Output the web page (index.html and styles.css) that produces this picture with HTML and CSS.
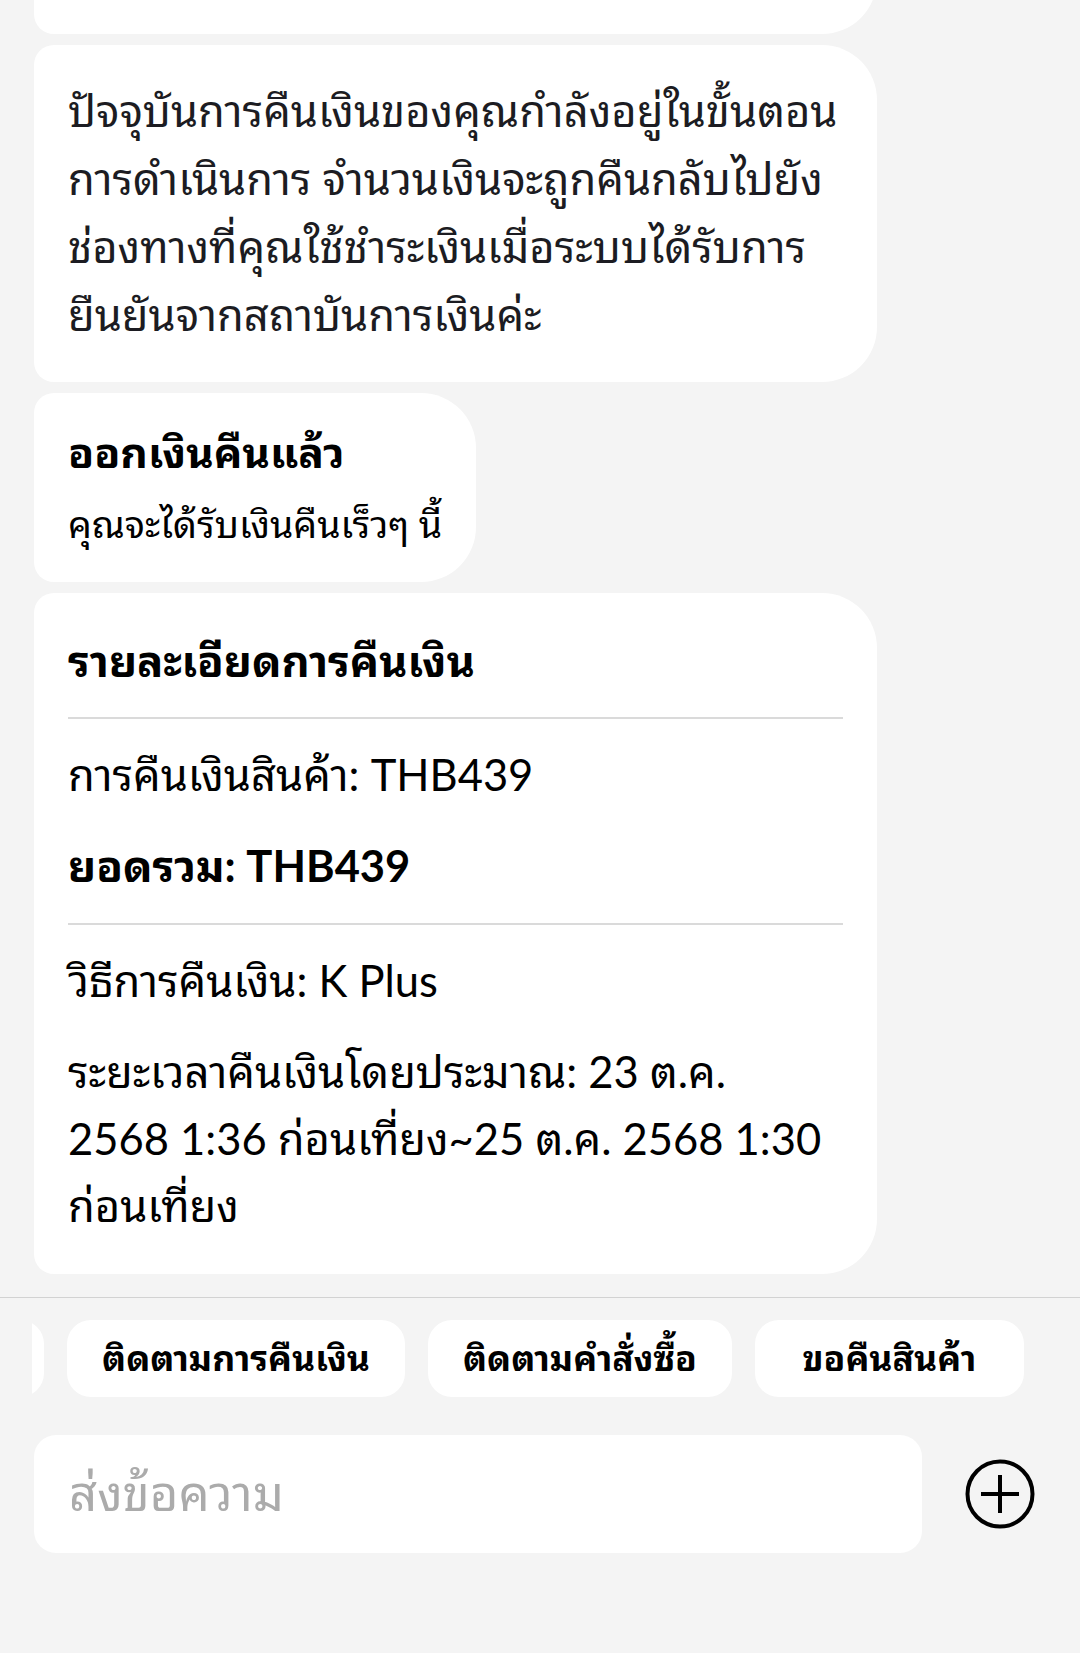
FILE: index.html
```html
<!DOCTYPE html>
<html lang="th">

<head>
    <meta charset="UTF-8">
    <meta name="viewport" content="width=device-width, initial-scale=1.0">
    <title>แชท</title>
    <link rel="stylesheet" href="styles.css">
</head>

<body>

    <div class="chat">
        <div class="messages">
            <div class="bubble">
                <p>เราได้รับคำขอคืนเงินของคุณแล้ว ระบบกำลังตรวจสอบข้อมูลคำสั่งซื้อของคุณ กรุณารอสักครู่ค่ะ</p>
            </div>

            <div class="bubble">
                <p>ปัจจุบันการคืนเงินของคุณกำลังอยู่ในขั้นตอนการดำเนินการ จำนวนเงินจะถูกคืนกลับไปยังช่องทางที่คุณใช้ชำระเงินเมื่อระบบได้รับการยืนยันจากสถาบันการเงินค่ะ</p>
            </div>

            <div class="bubble status">
                <p class="status-title">ออกเงินคืนแล้ว</p>
                <p class="status-text">คุณจะได้รับเงินคืนเร็วๆ นี้</p>
            </div>

            <div class="bubble detail">
                <h2>รายละเอียดการคืนเงิน</h2>
                <hr>
                <p>การคืนเงินสินค้า: THB439</p>
                <p class="total">ยอดรวม: THB439</p>
                <hr>
                <p>วิธีการคืนเงิน: K Plus</p>
                <p>ระยะเวลาคืนเงินโดยประมาณ: 23 ต.ค. 2568 1:36 ก่อนเที่ยง~25 ต.ค. 2568 1:30 ก่อนเที่ยง</p>
            </div>
        </div>

        <div class="quick-replies">
            <button class="chip">สถานะคำสั่งซื้อ</button>
            <button class="chip">ติดตามการคืนเงิน</button>
            <button class="chip">ติดตามคำสั่งซื้อ</button>
            <button class="chip">ขอคืนสินค้า</button>
        </div>

        <div class="composer">
            <div class="input">ส่งข้อความ</div>
            <button class="add-btn" aria-label="เพิ่ม">
                <svg width="70" height="70" viewBox="0 0 70 70">
                    <circle cx="35" cy="35" r="32.5" fill="none" stroke="#000" stroke-width="4"/>
                    <path d="M16 35 H54 M35 16 V54" stroke="#000" stroke-width="4"/>
                </svg>
            </button>
        </div>
    </div>

</body>

</html>
```

FILE: styles.css
```css
body {
    margin: 0;
    padding: 0;
    background-color: #f4f4f4;
    font-family: Lato, "Noto Sans Thai Looped", "Noto Sans Thai", "Noto Sans", sans-serif;
    color: #1c1c22;
}

p,
h2 {
    margin: 0;
}

.chat {
    width: 1080px;
    height: 1653px;
    overflow: hidden;
}

/* รายการข้อความ ชิดด้านล่างเหมือนแชทที่เลื่อนลงสุด */
.messages {
    height: 1298px;
    box-sizing: border-box;
    overflow: hidden;
    display: flex;
    flex-direction: column;
    justify-content: flex-end;
    align-items: flex-start;
    gap: 11px;
    padding: 0 0 23px 34px;
    border-bottom: 1px solid #d2d2d2;
}

.bubble {
    flex: none;
    box-sizing: border-box;
    max-width: 843px;
    background-color: #fff;
    border-radius: 20px 55px 55px 20px;
    padding: 31px 32px 34px 34px;
    font-size: 43.5px;
    line-height: 68px;
}

.status {
    padding: 28px 34px 27px;
    color: #000;
}

.status-title {
    font-weight: bold;
    font-size: 42.5px;
    line-height: 62px;
}

.status-text {
    margin-top: 10px;
    font-size: 37.5px;
    line-height: 62px;
}

.detail {
    width: 843px;
    padding: 34px 34px 35px;
    line-height: 67px;
    color: #000;
}

.detail h2 {
    font-size: 43.5px;
    font-weight: bold;
    line-height: 67px;
}

.detail hr {
    border: none;
    border-top: 2px solid #dadada;
    margin: 23px 0 22px;
}

.detail p {
    margin-bottom: 24px;
    padding-right: 14px;
}

.detail p:last-child {
    margin-bottom: 0;
}

.total {
    font-weight: bold;
}

/* ปุ่มตอบกลับด่วน เลื่อนไปท้ายสุด */
.quick-replies {
    display: flex;
    justify-content: flex-end;
    gap: 23px;
    overflow: hidden;
    margin-left: 32px;
    padding: 22px 56px 0 0;
}

.chip {
    flex: none;
    min-width: 269px;
    height: 77px;
    padding: 0 35px 8px;
    border: none;
    border-radius: 24px;
    background-color: #fff;
    font-family: inherit;
    font-size: 35.5px;
    font-weight: bold;
    color: #000;
}

.composer {
    display: flex;
    align-items: center;
    margin-top: 38px;
    padding: 0 45px 0 34px;
    gap: 43px;
}

.input {
    flex: 1;
    height: 118px;
    box-sizing: border-box;
    display: flex;
    align-items: center;
    padding: 0 35px 10px;
    background-color: #fff;
    border-radius: 22px;
    font-size: 49px;
    color: #ababab;
}

.add-btn {
    flex: none;
    width: 70px;
    height: 70px;
    padding: 0;
    border: none;
    background: none;
}

.add-btn svg {
    display: block;
}
```
